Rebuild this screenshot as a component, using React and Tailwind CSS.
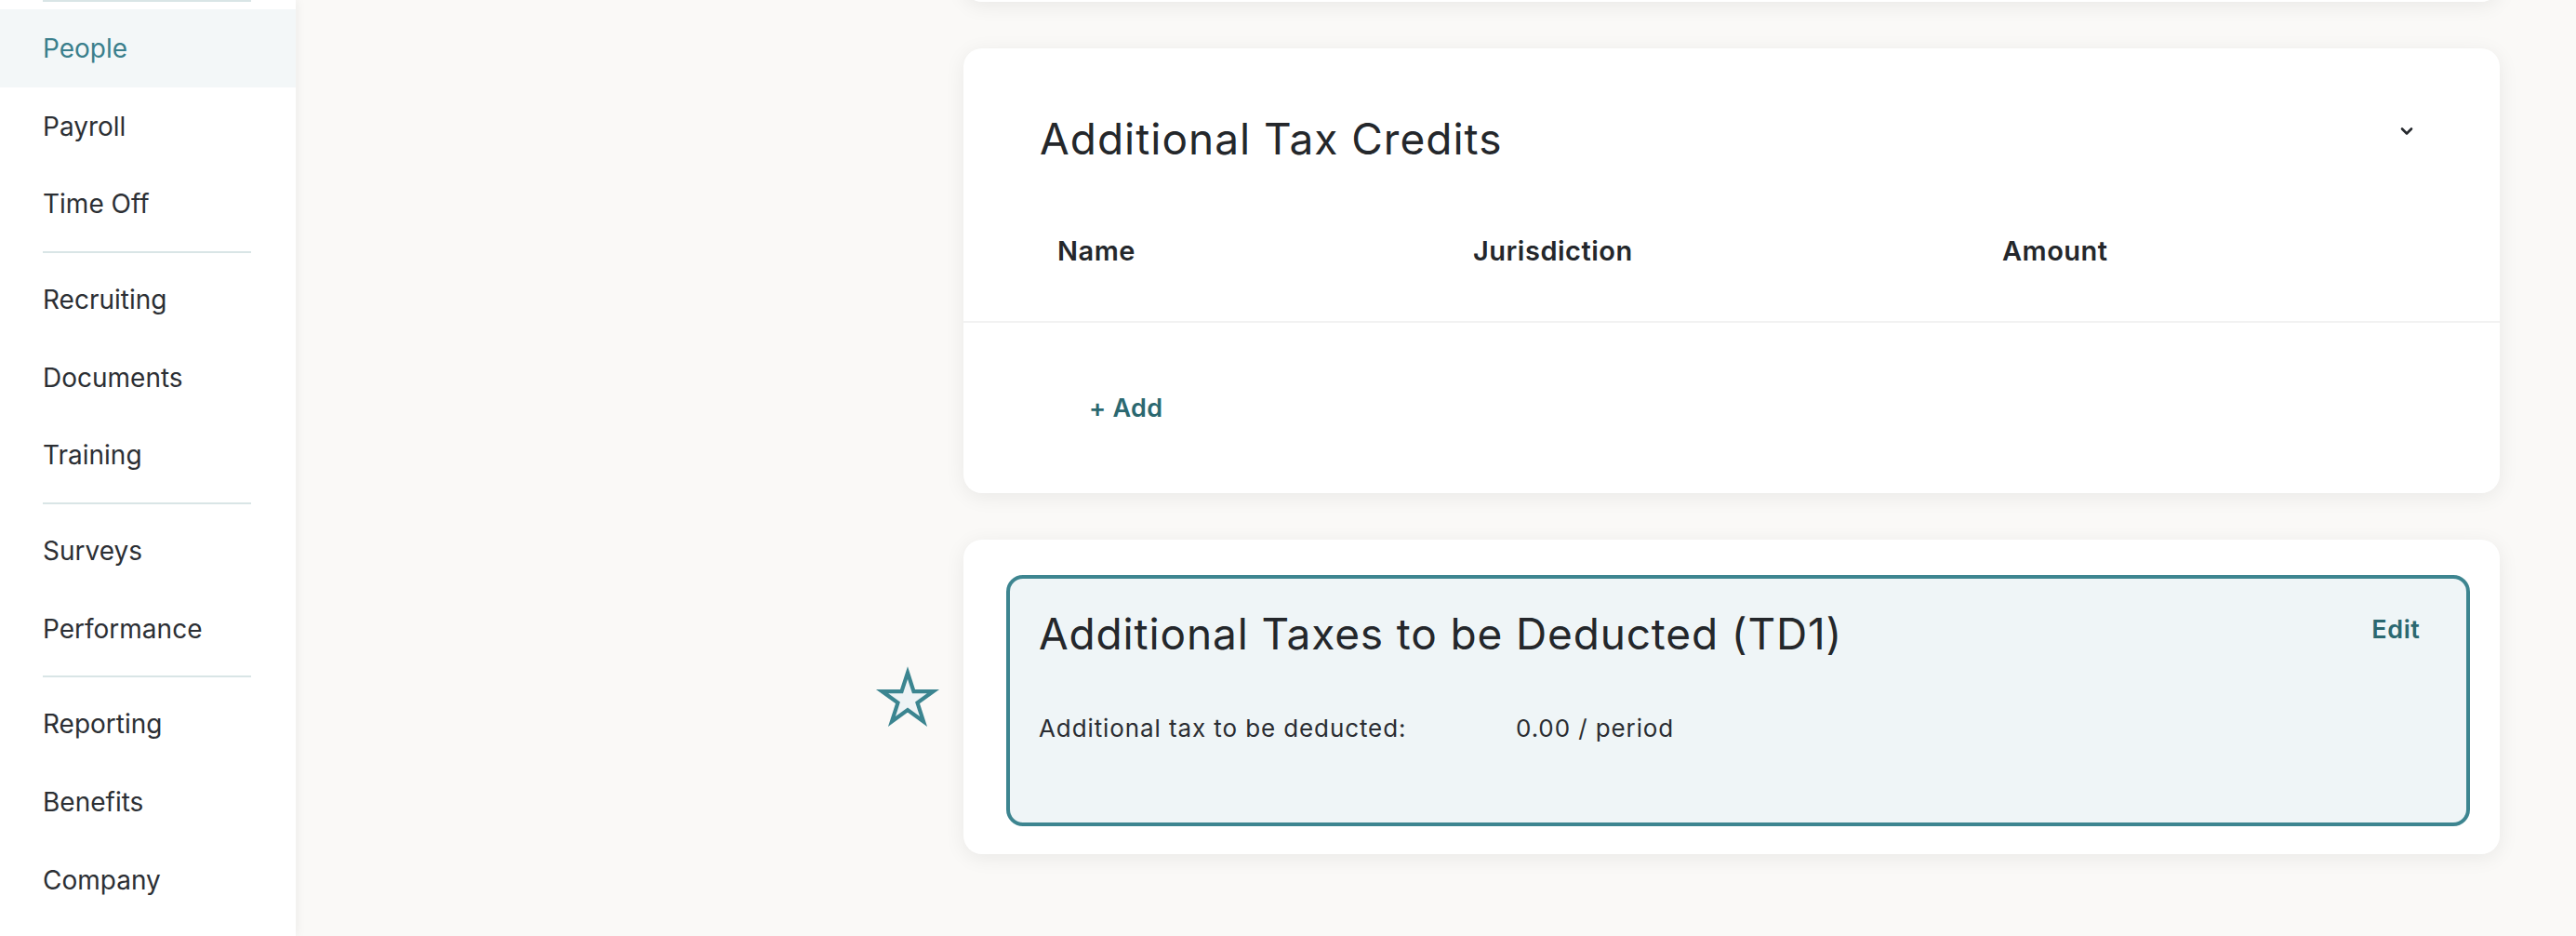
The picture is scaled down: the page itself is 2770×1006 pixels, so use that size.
import React from "react";

const font = { fontFamily: "Inter, 'Noto Sans', sans-serif" };

function Divider() {
  return <div className="ml-[46px] w-[224px] h-[2px] bg-[#d9e5e6] my-[8.3px]" />;
}

function NavItem({ label, active }) {
  return (
    <div
      className={
        "h-[83.8px] flex items-center pl-[46px] text-[28px] leading-[34px] " +
        (active ? "bg-[#f3f7f8] text-[#3a7f8c]" : "text-[#2c2f34]")
      }
    >
      {label}
    </div>
  );
}

function Star() {
  return (
    <svg width="72" height="68" viewBox="0 0 72 68" className="shrink-0">
      <polygon
        points="36,8 42.51,28.04 63.58,28.04 46.54,40.42 53.05,60.46 36,48.08 18.95,60.46 25.46,40.42 8.42,28.04 29.49,28.04"
        fill="#eef3f5"
        stroke="#3b8590"
        strokeWidth="4.2"
        strokeLinejoin="miter"
      />
    </svg>
  );
}

export default function App() {
  return (
    <div className="flex min-h-[1006px] h-[1006px] overflow-hidden bg-[#faf9f7]" style={font}>
      <aside className="relative z-10 w-[318px] shrink-0 bg-white shadow-[2px_0_10px_rgba(0,0,0,0.05)]">
        <div className="ml-[46px] w-[224px] h-[2px] bg-[#d9e5e6] mb-[8px]" />
        <NavItem label="People" active />
        <NavItem label="Payroll" />
        <NavItem label="Time Off" />
        <Divider />
        <NavItem label="Recruiting" />
        <NavItem label="Documents" />
        <NavItem label="Training" />
        <Divider />
        <NavItem label="Surveys" />
        <NavItem label="Performance" />
        <Divider />
        <NavItem label="Reporting" />
        <NavItem label="Benefits" />
        <NavItem label="Company" />
      </aside>

      <main className="flex-1 flex flex-col gap-[50px]">
        {/* previous card, mostly scrolled out */}
        <div className="flex">
          <div className="w-[718px] shrink-0" />
          <div className="w-[1652px] h-[42px] -mt-[40px] bg-white rounded-[20px] shadow-[0_4px_22px_rgba(0,0,0,0.07)]" />
        </div>

        {/* Additional Tax Credits */}
        <div className="flex">
          <div className="w-[718px] shrink-0" />
          <section className="w-[1652px] h-[478px] bg-white rounded-[20px] shadow-[0_4px_22px_rgba(0,0,0,0.07)] flex flex-col">
            <div className="flex items-start justify-between pl-[82px] pr-[93px] pt-[69px]">
              <h2 className="text-[46px] leading-[56px] font-normal tracking-[1px] text-[#24272b]">Additional Tax Credits</h2>
              <svg width="14" height="10" viewBox="0 0 14 10" className="mt-[15px]">
                <path d="M2 2.5 L7 7.5 L12 2.5" fill="none" stroke="#25282d" strokeWidth="2.6" strokeLinecap="round" strokeLinejoin="round" />
              </svg>
            </div>
            <div className="grid grid-cols-[447px_569px_1fr] pl-[101px] pt-[74.5px] pb-[57.5px] border-b-2 border-[#f2f2f2] text-[29px] leading-[36px] font-semibold tracking-[0.5px] text-[#24272b]">
              <div>Name</div>
              <div>Jurisdiction</div>
              <div>Amount</div>
            </div>
            <div className="flex-1 flex items-center pl-[135px]">
              <span className="text-[27px] leading-[34px] font-semibold tracking-[0.3px] text-[#2b6870]">+ Add</span>
            </div>
          </section>
        </div>

        {/* Additional Taxes to be Deducted */}
        <div className="flex items-center">
          <div className="w-[718px] shrink-0 flex justify-end pr-[24px]">
            <Star />
          </div>
          <section className="w-[1652px] h-[338px] bg-white rounded-[20px] shadow-[0_4px_22px_rgba(0,0,0,0.07)] pl-[46px] pr-[32.5px] pt-[38px]">
            <div className="h-[270px] rounded-[18px] border-[4px] border-[#3d8590] bg-[#eff5f7] pl-[31px] pr-[49px] pt-[30.7px]">
              <div className="flex items-start justify-between">
                <h2 className="text-[46px] leading-[56px] font-normal tracking-[0.85px] text-[#24272b]">
                  Additional Taxes to be Deducted (TD1)
                </h2>
                <span className="mt-[7px] text-[27px] leading-[34px] font-semibold tracking-[0.6px] text-[#2b6870]">Edit</span>
              </div>
              <div className="mt-[58.7px] flex text-[26px] leading-[32px] tracking-[0.9px] text-[#2a2d32]">
                <div className="w-[513px]">Additional tax to be deducted:</div>
                <div>0.00 / period</div>
              </div>
            </div>
          </section>
        </div>
      </main>
    </div>
  );
}
